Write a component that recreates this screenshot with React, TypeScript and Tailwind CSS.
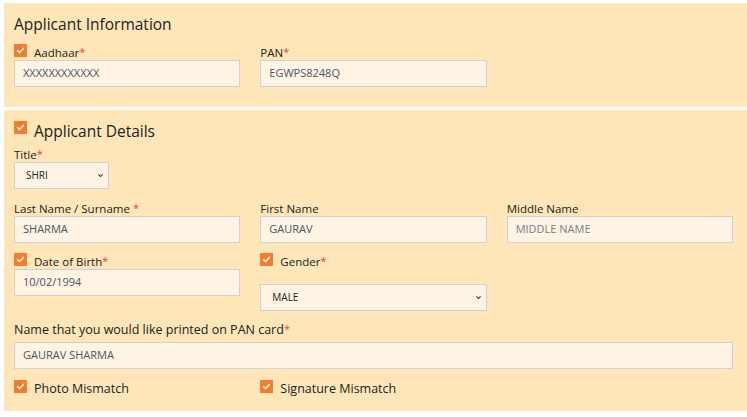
import React from 'react';

const font = { fontFamily: '"Open Sans", "Noto Sans", sans-serif' };

const Check = ({ className }: { className?: string }) => (
  <span className={`flex h-[13px] w-[13px] shrink-0 items-center justify-center bg-[#f47c2c] ${className ?? 'mt-[1px]'}`}>
    <svg viewBox="0 0 12 12" className="h-[9px] w-[9px]">
      <path d="M2.2 6.4 L4.8 8.8 L9.8 3.2" fill="none" stroke="white" strokeWidth="2" strokeLinecap="round" strokeLinejoin="round" />
    </svg>
  </span>
);

const Star = () => <span className="relative top-[-1px] text-[11px] text-[#e0463a]">*</span>;

const Label = ({ children }: { children: React.ReactNode }) => (
  <div className="text-[11.5px] leading-[15px] text-[#222]">{children}</div>
);

const CheckLabel = ({ children }: { children: React.ReactNode }) => (
  <div className="flex items-start gap-[7px]">
    <Check />
    <span className="pt-[2px] text-[11.5px] leading-[15px] text-[#222]">{children}</span>
  </div>
);

const Input = ({ value, placeholder }: { value?: string; placeholder?: string }) => (
  <div className="flex h-[27px] items-center border border-[#ccd2d9] bg-[#fff3e3] px-[8px] text-[11px] text-[#4a5568]">
    {value ? value : <span className="text-[#7a8089]">{placeholder}</span>}
  </div>
);

const Select = ({ value, className }: { value: string; className?: string }) => (
  <div className={`flex h-[27px] items-center justify-between border border-[#ccd2d9] bg-[#fff3e3] pl-[11px] pr-[4px] text-[10px] text-[#222] ${className ?? ''}`}>
    <span>{value}</span>
    <svg viewBox="0 0 10 10" className="h-[7px] w-[7px]">
      <path d="M2 3.5 L5 6.5 L8 3.5" fill="none" stroke="#333" strokeWidth="1.6" />
    </svg>
  </div>
);

export default function App() {
  return (
    <div className="min-h-[417px] w-[747px] bg-white pt-[3px] pl-[4px]" style={font}>
      <div className="bg-[#fee6b9] pt-[10px] pb-[20px] pl-[10px] pr-[14px]">
        <h2 className="text-[15.5px] leading-[22px] text-[#222]">Applicant Information</h2>
        <div className="mt-[8px] grid grid-cols-3 gap-x-[20px]">
          <div>
            <CheckLabel>Aadhaar<Star /></CheckLabel>
            <Input value="XXXXXXXXXXXX" />
          </div>
          <div>
            <div className="pt-[2px]">
              <Label>PAN<Star /></Label>
            </div>
            <Input value="EGWPS8248Q" />
          </div>
        </div>
      </div>

      <div className="mt-[3px] bg-[#fee6b9] pt-[10px] pb-[14px] pl-[10px] pr-[14px]">
        <div className="flex h-[22px] items-start gap-[7px]">
          <Check className="mt-[1px]" />
          <h2 className="text-[15.5px] leading-[22px] text-[#222]">Applicant Details</h2>
        </div>
        <div className="mt-[5px]">
          <Label>Title<Star /></Label>
          <Select value="SHRI" className="w-[95px] h-[26px]" />
        </div>
        <div className="mt-[12px] grid grid-cols-3 gap-x-[20px]">
          <div>
            <Label>Last Name / Surname <Star /></Label>
            <Input value="SHARMA" />
          </div>
          <div>
            <Label>First Name</Label>
            <Input value="GAURAV" />
          </div>
          <div>
            <Label>Middle Name</Label>
            <Input placeholder="MIDDLE NAME" />
          </div>
        </div>
        <div className="mt-[9px] grid grid-cols-3 gap-x-[20px]">
          <div>
            <CheckLabel>Date of Birth<Star /></CheckLabel>
            <Input value="10/02/1994" />
          </div>
          <div>
            <CheckLabel>Gender<Star /></CheckLabel>
            <Select value="MALE" className="mt-[15px]" />
          </div>
        </div>
        <div className="mt-[10px]">
          <div className="mb-[4px] text-[12.5px] leading-[17px] text-[#222]">Name that you would like printed on PAN card<Star /></div>
          <Input value="GAURAV SHARMA" />
        </div>
        <div className="mt-[10px] grid grid-cols-3 gap-x-[20px]">
          <div className="flex items-start gap-[7px]">
            <Check />
            <span className="pt-[1px] text-[12.5px] leading-[17px] text-[#222]">Photo Mismatch</span>
          </div>
          <div className="flex items-start gap-[7px]">
            <Check />
            <span className="pt-[1px] text-[12.5px] leading-[17px] text-[#222]">Signature Mismatch</span>
          </div>
        </div>
      </div>
    </div>
  );
}
